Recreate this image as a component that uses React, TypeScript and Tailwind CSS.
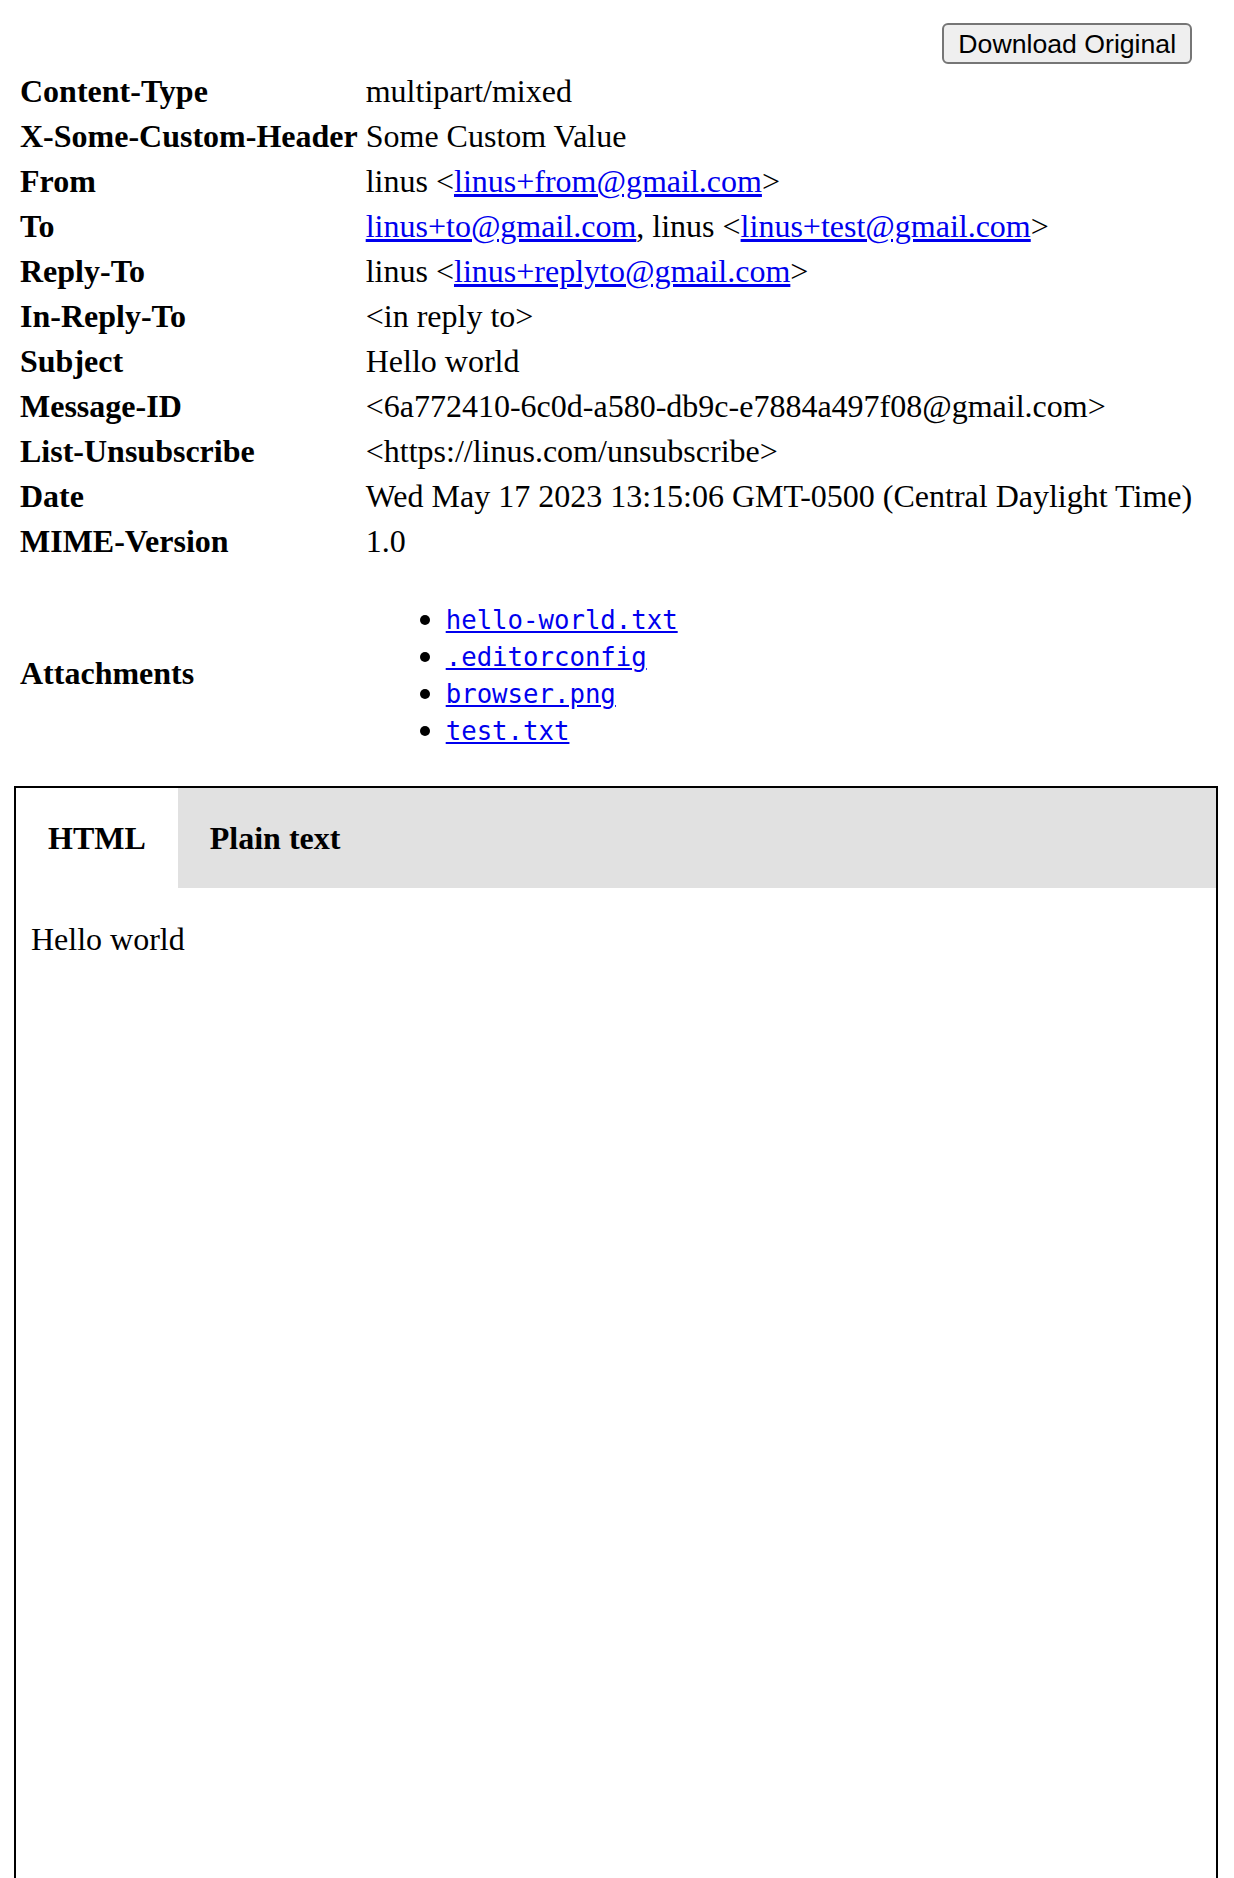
import React from "react";

function L({ children }: { children: React.ReactNode }) {
  return <a href="#" className="text-[#0000ee] underline">{children}</a>;
}

export default function App() {
  const rows: [string, React.ReactNode][] = [
    ["Content-Type", "multipart/mixed"],
    ["X-Some-Custom-Header", "Some Custom Value"],
    ["From", <>{"linus <"}<L>linus+from@gmail.com</L>{">"}</>],
    ["To", <><L>linus+to@gmail.com</L>{", linus <"}<L>linus+test@gmail.com</L>{">"}</>],
    ["Reply-To", <>{"linus <"}<L>linus+replyto@gmail.com</L>{">"}</>],
    ["In-Reply-To", "<in reply to>"],
    ["Subject", "Hello world"],
    ["Message-ID", "<6a772410-6c0d-a580-db9c-e7884a497f08@gmail.com>"],
    ["List-Unsubscribe", "<https://linus.com/unsubscribe>"],
    ["Date", "Wed May 17 2023 13:15:06 GMT-0500 (Central Daylight Time)"],
    ["MIME-Version", "1.0"],
  ];
  const files = ["hello-world.txt", ".editorconfig", "browser.png", "test.txt"];
  return (
    <div className="min-h-[1878px] bg-white text-black [font-family:'Liberation_Serif','Times_New_Roman',serif] text-[32px] leading-[37px]">
      <div className="pt-[16px] pl-[14px]">
        <div className="grid w-max grid-cols-[max-content_max-content] gap-[4px] p-[4px]">
          <div className="col-span-2 flex h-[46px] justify-end p-[2px]">
            <button className="mt-[1px] h-[41px] rounded-[6px] border-2 border-[#767676] bg-[#efefef] px-[14px] [font-family:'Liberation_Sans',Arial,sans-serif] text-[26.67px] leading-[30px] text-black">
              Download Original
            </button>
          </div>
          {rows.map(([k, v]) => (
            <React.Fragment key={k}>
              <div className="p-[2px] pt-[3px] pb-[1px] font-bold">{k}</div>
              <div className="p-[2px] pt-[3px] pb-[1px] whitespace-nowrap">{v}</div>
            </React.Fragment>
          ))}
          <div className="self-center p-[2px] font-bold">Attachments</div>
          <div className="p-[2px]">
            <ul className="mt-[33px] mb-[31px] list-disc pl-[80px]">
              {files.map((f) => (
                <li key={f} className="leading-[37px]">
                  <a href="#" className="text-[#0000ee] underline [font-family:'DejaVu_Sans_Mono',monospace] text-[25.7px] leading-[20px]">
                    {f}
                  </a>
                </li>
              ))}
            </ul>
          </div>
        </div>
      </div>
      <div className="ml-[14px] mr-[16px] mt-[1px] h-[1120px] border-2 border-black">
        <div className="flex bg-[#e1e1e1]">
          <div className="bg-white px-[32px] pt-[32px] pb-[31px] font-bold">HTML</div>
          <div className="px-[32px] pt-[32px] pb-[31px] font-bold">Plain text</div>
        </div>
        <div className="pl-[15px] pt-[33px]">Hello world</div>
      </div>
    </div>
  );
}
